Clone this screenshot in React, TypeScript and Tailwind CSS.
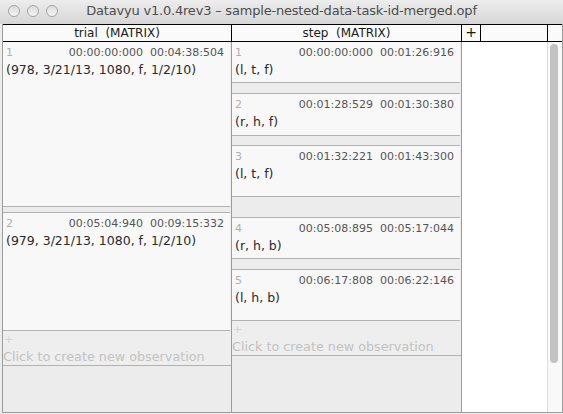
import React from "react";

interface Cell {
  id: number;
  onset: string;
  offset: string;
  value: string;
  h: string;
  gap: string;
}

const trialCells: Cell[] = [
  { id: 1, onset: "00:00:00:000", offset: "00:04:38:504", value: "(978, 3/21/13, 1080, f, 1/2/10)", h: "h-[165px]", gap: "" },
  { id: 2, onset: "00:05:04:940", offset: "00:09:15:332", value: "(979, 3/21/13, 1080, f, 1/2/10)", h: "h-[119px]", gap: "mt-[5px] border-t" },
];

const stepCells: Cell[] = [
  { id: 1, onset: "00:00:00:000", offset: "00:01:26:916", value: "(l, t, f)", h: "h-[41px]", gap: "" },
  { id: 2, onset: "00:01:28:529", offset: "00:01:30:380", value: "(r, h, f)", h: "h-[43px]", gap: "mt-[10px] border-t" },
  { id: 3, onset: "00:01:32:221", offset: "00:01:43:300", value: "(l, t, f)", h: "h-[52px]", gap: "mt-[9px] border-t" },
  { id: 4, onset: "00:05:08:895", offset: "00:05:17:044", value: "(r, h, b)", h: "h-[42px]", gap: "mt-[20px] border-t" },
  { id: 5, onset: "00:06:17:808", offset: "00:06:22:146", value: "(l, h, b)", h: "h-[52px]", gap: "mt-[10px] border-t" },
];

function CellView({ cell }: { cell: Cell }) {
  return (
    <div
      className={
        "shrink-0 mr-[1px] bg-[#f8f8f8] border-b border-[#b2b2b2] flex flex-col " +
        cell.h +
        " " +
        cell.gap
      }
    >
      <div className="flex items-center justify-between pl-[3px] pr-[6px] pt-[4px] h-[17px] text-[11px] leading-none">
        <span className="text-[#b0b0b0]">{cell.id}</span>
        <span className="text-[#555555] whitespace-pre">
          {cell.onset + "  " + cell.offset}
        </span>
      </div>
      <div className="pl-[3px] pt-[2px] text-[12.5px] leading-[18px] text-[#2a2a2a]">
        {cell.value}
      </div>
    </div>
  );
}

function NewObservation() {
  return (
    <div className="shrink-0 h-[35px] border-b border-[#b2b2b2] bg-[#eeeeee] flex flex-col">
      <span className="h-[17px] pl-[1px] pt-[2px] text-[11px] leading-[14px] text-[#d4d4d4]">+</span>
      <span className="text-[12.75px] leading-[17px] text-[#c2c2c2] whitespace-nowrap">
        Click to create new observation
      </span>
    </div>
  );
}

export default function App() {
  return (
    <div
      className="w-[563px] h-[414px] bg-[#ececec] flex flex-col overflow-hidden"
      style={{ fontFamily: '"DejaVu Sans", Verdana, sans-serif' }}
    >
      {/* title bar */}
      <div className="h-[24px] shrink-0 bg-gradient-to-b from-[#ededed] to-[#d6d6d6] relative flex items-center justify-center">
        <div className="absolute left-[8px] top-[5px] flex gap-[7px]">
          <span className="w-[12px] h-[12px] rounded-full border border-[#a3a3a3] bg-gradient-to-b from-[#dcdcdc] to-[#f4f4f4]" />
          <span className="w-[12px] h-[12px] rounded-full border border-[#a3a3a3] bg-gradient-to-b from-[#dcdcdc] to-[#f4f4f4]" />
          <span className="w-[12px] h-[12px] rounded-full border border-[#a3a3a3] bg-gradient-to-b from-[#dcdcdc] to-[#f4f4f4]" />
        </div>
        <span className="text-[13px] text-[#4d4d4d] pb-[2px] tracking-[-0.2px]">
          Datavyu v1.0.4rev3 – sample-nested-data-task-id-merged.opf
        </span>
      </div>

      {/* spreadsheet */}
      <div className="ml-[2px] w-[561px] h-[389px] border-l border-r border-b border-[#9c9c9c] flex flex-col">
        <div className="h-[18px] shrink-0 border-t border-b border-black bg-[#fafafa] flex text-[12px] leading-[16px] text-[#1a1a1a]">
          <div className="w-[229px] border-r border-black text-center whitespace-pre">trial  (MATRIX)</div>
          <div className="w-[230px] border-r border-black text-center whitespace-pre">step  (MATRIX)</div>
          <div className="w-[19px] border-r border-black text-center text-[14px] leading-[15px]">+</div>
          <div className="w-[67px] border-r border-black" />
          <div className="flex-1" />
        </div>
        <div className="flex-1 flex min-h-0">
          <div className="w-[229px] border-r border-[#9c9c9c] flex flex-col">
            {trialCells.map((c) => (
              <CellView key={c.id} cell={c} />
            ))}
            <NewObservation />
          </div>
          <div className="w-[230px] border-r border-[#9c9c9c] flex flex-col">
            {stepCells.map((c) => (
              <CellView key={c.id} cell={c} />
            ))}
            <NewObservation />
          </div>
          <div className="w-[86px] bg-white border-r border-[#dcdcdc]" />
          <div className="flex-1 bg-[#f9f9f9] pt-[2px] pl-[2px]">
            <div className="w-[8px] h-[319px] rounded-full bg-[#c2c2c2]" />
          </div>
        </div>
      </div>
    </div>
  );
}
